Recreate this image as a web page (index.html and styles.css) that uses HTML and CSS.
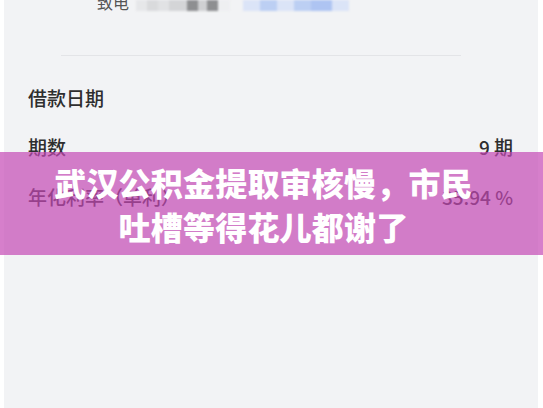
FILE: index.html
```html
<!DOCTYPE html>
<html lang="zh-CN">
<head>
<meta charset="utf-8">
<title>武汉公积金提取审核慢，市民吐槽等得花儿都谢了</title>
<link rel="stylesheet" href="styles.css">
</head>
<body>
  <main class="sheet">
    <div class="contact">
      <span class="contact-label">致电</span>
      <span class="mask mask-gray">
        <i class="px px-a"></i><i class="px px-b"></i><i class="px px-c"></i><i class="px px-d"></i><i class="px px-dark"></i><i class="px px-e"></i><i class="px px-dark"></i><i class="px px-f"></i>
      </span>
      <span class="mask mask-blue">
        <i class="px bx-a"></i><i class="px bx-b"></i><i class="px bx-a"></i><i class="px bx-b"></i><i class="px bx-c"></i><i class="px bx-a"></i>
      </span>
    </div>
    <hr class="divider">
    <h2 class="section-title">借款日期</h2>
    <div class="row">
      <span class="row-label">期数</span>
      <span class="row-value">9&nbsp;期</span>
    </div>
    <div class="row">
      <span class="row-label">年化利率（单利）</span>
      <span class="row-value">35.94&nbsp;%</span>
    </div>
  </main>
  <div class="banner">
    <h1 class="banner-title">武汉公积金提取审核慢，市民<br>吐槽等得花儿都谢了</h1>
  </div>
</body>
</html>
```
FILE: styles.css
```css
html, body {
  margin: 0;
  padding: 0;
}

body {
  position: relative;
  width: 543px;
  height: 408px;
  overflow: hidden;
  background: #ffffff;
  font-family: "Noto Sans CJK SC", "Noto Sans", sans-serif;
  color: #2e2e2e;
}

.sheet {
  margin: 0 5px 0 4px;
  height: 408px;
  background: #f2f3f5;
  overflow: hidden;
}

/* phone line with redacted number */
.contact {
  display: flex;
  align-items: center;
  margin-top: -8px;
  padding-left: 93px;
  height: 20px;
}

.contact-label {
  font-size: 16px;
  line-height: 20px;
  color: #555555;
}

.mask {
  display: flex;
  height: 11px;
  margin-top: 6px;
  filter: blur(0.8px);
}

.mask-gray {
  margin-left: 7px;
}

.mask-blue {
  margin-left: 13px;
}

.px {
  display: block;
  width: 11px;
  height: 11px;
}

.px-a { background: #e6e7e9; }
.px-b { background: #d9dadc; }
.px-c { background: #e1e2e4; }
.px-d { background: #d4d5d7; width: 18px; }
.px-e { background: #cfd0d2; width: 9px; }
.px-f { background: #eeeff1; width: 12px; }
.px-dark { background: #8e8f91; }

.bx-a { background: #dbe4f7; width: 17px; }
.bx-b { background: #bccff3; width: 17px; }
.bx-c { background: #aec4f2; width: 21px; }

.divider {
  margin: 43px 0 0 57px;
  width: 400px;
  height: 1px;
  border: 0;
  background: #e3e4e7;
}

.section-title {
  margin: 29px 0 0 24px;
  font-size: 19px;
  font-weight: 500;
  line-height: 26px;
  color: #2e2e2e;
}

.row {
  display: flex;
  justify-content: space-between;
  align-items: center;
  padding: 0 25px 0 24px;
  height: 26px;
  margin-top: 23px;
  font-size: 19px;
  font-weight: 500;
  line-height: 26px;
  color: #2e2e2e;
}

.row + .row {
  margin-top: 24px;
}

.row-value {
  font-family: "Noto Sans CJK SC", "Liberation Sans", sans-serif;
}

/* translucent headline band laid over the page */
.banner {
  position: absolute;
  left: 0;
  right: 0;
  top: 152px;
  height: 103px;
  display: flex;
  align-items: center;
  justify-content: center;
  padding-right: 16px;
  background: rgba(196, 72, 181, 0.7);
}

.banner-title {
  margin: 0;
  font-size: 32px;
  font-weight: 900;
  line-height: 44px;
  letter-spacing: 0.2px;
  text-align: center;
  color: #ffffff;
}
```
